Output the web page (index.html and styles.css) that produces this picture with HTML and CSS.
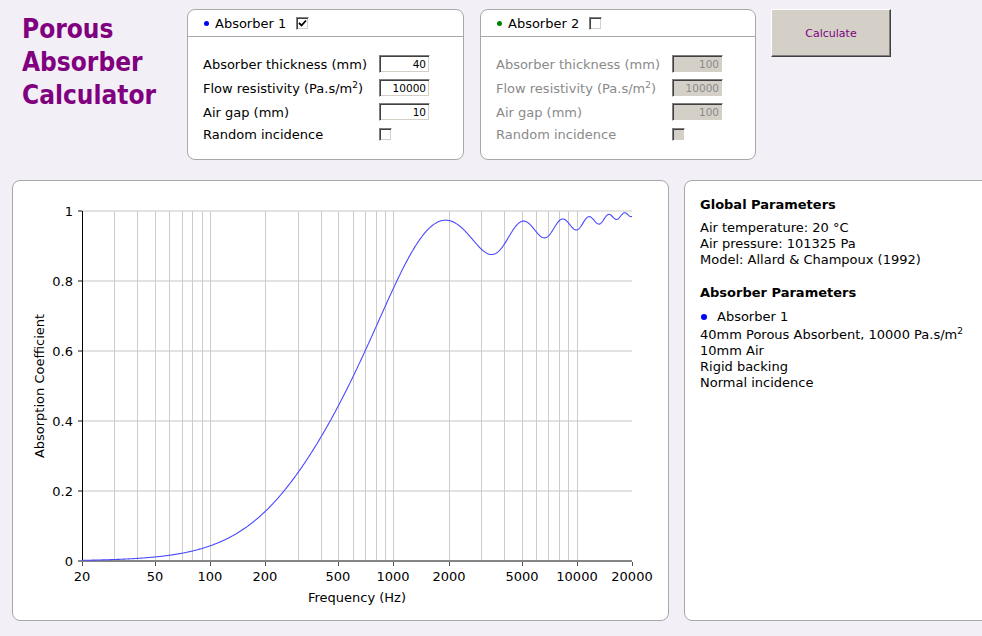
FILE: index.html
```html
<!DOCTYPE html>
<html>
<head>
<meta charset="utf-8">
<title>Porous Absorber Calculator</title>
<link rel="stylesheet" href="styles.css">
</head>
<body>
<div class="page">
  <div class="top">
    <h1 class="title">Porous<br>Absorber<br>Calculator</h1>

    <section class="panel absorber">
      <header class="panel-head">
        <span class="dot dot-blue"></span>
        <span class="head-label">Absorber 1</span>
        <span class="cb sunken"><svg class="check" viewBox="0 0 11 11" width="11" height="11"><polyline points="2,5 4.5,7.5 9,2.5" fill="none" stroke="#000" stroke-width="1.8"/></svg></span>
      </header>
      <div class="fields">
        <label class="field-label">Absorber thickness (mm)</label><input class="num sunken" value="40" readonly>
        <label class="field-label">Flow resistivity (Pa.s/m<sup>2</sup>)</label><input class="num sunken" value="10000" readonly>
        <label class="field-label">Air gap (mm)</label><input class="num sunken" value="10" readonly>
        <label class="field-label">Random incidence</label><span class="cb sunken"></span>
      </div>
    </section>

    <section class="panel absorber absorber-2">
      <header class="panel-head">
        <span class="dot dot-green"></span>
        <span class="head-label">Absorber 2</span>
        <span class="cb sunken"></span>
      </header>
      <div class="fields disabled">
        <label class="field-label">Absorber thickness (mm)</label><input class="num sunken" value="100" disabled>
        <label class="field-label">Flow resistivity (Pa.s/m<sup>2</sup>)</label><input class="num sunken" value="10000" disabled>
        <label class="field-label">Air gap (mm)</label><input class="num sunken" value="100" disabled>
        <label class="field-label">Random incidence</label><span class="cb sunken cb-disabled"></span>
      </div>
    </section>

    <button class="calc" type="button">Calculate</button>
  </div>

  <div class="bottom">
    <section class="panel chart">
      <svg class="chart-svg" width="655" height="439" viewBox="0 0 655 439">
        <g id="hgrid"></g>
        <g id="vgrid"></g>
        <g id="ticks"></g>
        <line class="axis-x" x1="66" y1="380" x2="619" y2="380"/>
        <line class="axis-y" x1="69.5" y1="30" x2="69.5" y2="380"/>
        <path id="curve" class="curve" d=""/>
        <g class="ylabels" text-anchor="end">
          <text x="60" y="35">1</text>
          <text x="60" y="105">0.8</text>
          <text x="60" y="175">0.6</text>
          <text x="60" y="245">0.4</text>
          <text x="60" y="315">0.2</text>
          <text x="60" y="385">0</text>
        </g>
        <g class="xlabels" text-anchor="middle">
          <text x="69" y="400">20</text>
          <text x="142" y="400">50</text>
          <text x="197" y="400">100</text>
          <text x="252" y="400">200</text>
          <text x="325" y="400">500</text>
          <text x="380" y="400">1000</text>
          <text x="436" y="400">2000</text>
          <text x="509" y="400">5000</text>
          <text x="564" y="400">10000</text>
          <text x="619" y="400">20000</text>
        </g>
        <text class="axis-title" x="344" y="421" text-anchor="middle">Frequency (Hz)</text>
        <text class="axis-title" transform="translate(30.5,205) rotate(-90)" text-anchor="middle">Absorption Coefficient</text>
      </svg>
    </section>

    <section class="panel info">
      <h2 class="info-head">Global Parameters</h2>
      <p class="info-line">Air temperature: 20 °C</p>
      <p class="info-line">Air pressure: 101325 Pa</p>
      <p class="info-line">Model: Allard &amp; Champoux (1992)</p>
      <h2 class="info-head info-head-2">Absorber Parameters</h2>
      <p class="info-line info-name"><span class="dot dot-blue dot-big"></span>Absorber 1</p>
      <p class="info-line">40mm Porous Absorbent, 10000 Pa.s/m<sup>2</sup></p>
      <p class="info-line">10mm Air</p>
      <p class="info-line">Rigid backing</p>
      <p class="info-line">Normal incidence</p>
    </section>
  </div>
</div>
<script src="script.js"></script>
</body>
</html>
```

FILE: styles.css
```css
html, body {
  margin: 0;
  padding: 0;
  width: 982px;
  height: 636px;
  overflow: hidden;
}
body {
  background: #f3eff6;
  font-family: "DejaVu Sans", Verdana, sans-serif;
  font-size: 13px;
  color: #000;
}
.page {
  width: 982px;
  height: 636px;
}
.top {
  display: flex;
  align-items: flex-start;
  height: 180px;
}
.title {
  margin: 0;
  width: 187px;
  flex-shrink: 0;
  box-sizing: border-box;
  padding: 13px 0 0 22px;
  font-family: "DejaVu Sans Condensed", "DejaVu Sans", sans-serif;
  font-stretch: condensed;
  font-weight: bold;
  font-size: 26px;
  line-height: 33px;
  color: #800080;
}
.panel {
  background: #fff;
  border: 1px solid #a8a8a8;
  border-radius: 8px;
  box-sizing: border-box;
  flex-shrink: 0;
}
.absorber {
  margin-top: 9px;
  width: 277px;
  height: 151px;
}
.absorber-2 {
  margin-left: 16px;
  width: 276px;
}
.panel-head {
  display: flex;
  align-items: center;
  height: 26px;
  border-bottom: 1px solid #a8a8a8;
  padding-left: 16px;
}
.head-label {
  margin-left: 6px;
  margin-right: 10px;
}
.dot {
  display: inline-block;
  width: 5px;
  height: 5px;
  border-radius: 50%;
}
.dot-blue { background: #0000ff; }
.dot-green { background: #008000; }
.dot-big {
  width: 6px;
  height: 6px;
  margin: 0 10px 1px 1px;
  vertical-align: middle;
}
.sunken {
  border: 1px solid;
  border-color: #808080 #ffffff #ffffff #808080;
  box-shadow: inset 1px 1px 0 #404040, inset -1px -1px 0 #d4d0c8;
  box-sizing: border-box;
}
.cb {
  display: inline-flex;
  align-items: center;
  justify-content: center;
  width: 13px;
  height: 13px;
  background: #fff;
}
.cb-disabled {
  background: #d4d0c8;
}
.check {
  display: block;
}
.fields {
  display: grid;
  grid-template-columns: 176px 51px;
  grid-template-rows: 18px 18px 18px 14px;
  row-gap: 6px;
  align-items: center;
  padding: 18px 0 0 15px;
}
.field-label {
  white-space: nowrap;
}
sup {
  font-size: 9px;
  line-height: 0;
  vertical-align: 5px;
}
.num {
  width: 51px;
  height: 18px;
  margin: 0;
  padding: 0 3px 0 0;
  background: #fff;
  color: #000;
  font-family: "DejaVu Sans", Verdana, sans-serif;
  font-size: 10.5px;
  text-align: right;
  outline: none;
}
.disabled .field-label {
  color: #8a8a8a;
}
.disabled .num {
  background: #d4d0c8;
  color: #8a8a8a;
}
.calc {
  margin: 9px 0 0 15px;
  width: 120px;
  height: 48px;
  padding: 0;
  background: #d4d0c8;
  border: 1px solid;
  border-color: #ffffff #404040 #404040 #ffffff;
  box-shadow: inset -1px -1px 0 #808080;
  color: #800080;
  font-family: "DejaVu Sans", Tahoma, sans-serif;
  font-size: 11px;
}
.bottom {
  display: flex;
  align-items: flex-start;
  padding-left: 12px;
  gap: 15px;
}
.chart {
  width: 657px;
  height: 441px;
}
.chart-svg {
  display: block;
  font-family: "DejaVu Sans", Verdana, sans-serif;
  font-size: 13px;
}
.hgrid-line { stroke: #e2e2e2; stroke-width: 2; }
.vgrid-line { stroke: #cccccc; stroke-width: 1; }
.ytick { stroke: #888888; stroke-width: 2; }
.xtick { stroke: #555555; stroke-width: 1; }
.axis-x { stroke: #858585; stroke-width: 2; }
.axis-y { stroke: #000000; stroke-width: 1; }
.curve {
  fill: none;
  stroke: #4a4aff;
  stroke-width: 1.1;
}
.info {
  width: 320px;
  height: 441px;
  border-radius: 8px 0 0 8px;
  padding: 16px 0 0 15px;
}
.info-head {
  margin: 0 0 7px 0;
  font-size: 13px;
  font-weight: bold;
  line-height: 16px;
}
.info-head-2 {
  margin-top: 17px;
  margin-bottom: 8px;
}
.info-line {
  margin: 0;
  line-height: 16px;
  white-space: nowrap;
}
.info-name {
  margin-bottom: 2px;
}
```

FILE: script.js
```js
(function () {
  var NS = 'http://www.w3.org/2000/svg';
  var X0 = 69, X1 = 619, Y0 = 380, Y1 = 30;
  function fx(f) { return X0 + Math.log10(f / 20) * (X1 - X0) / 3; }
  function fy(a) { return Y0 - a * (Y0 - Y1); }

  function addLine(parent, x1, y1, x2, y2, cls) {
    var l = document.createElementNS(NS, 'line');
    l.setAttribute('x1', x1); l.setAttribute('y1', y1);
    l.setAttribute('x2', x2); l.setAttribute('y2', y2);
    l.setAttribute('class', cls);
    parent.appendChild(l);
  }

  var hgrid = document.getElementById('hgrid');
  var vgrid = document.getElementById('vgrid');
  var ticks = document.getElementById('ticks');

  for (var i = 1; i <= 5; i++) {
    var y = fy(i * 0.2);
    addLine(hgrid, X0, y, X1, y, 'hgrid-line');
  }
  for (var j = 0; j <= 5; j++) {
    var yt = fy(j * 0.2);
    addLine(ticks, 65, yt, 69, yt, 'ytick');
  }
  for (var d = 10; d <= 10000; d *= 10) {
    for (var m = 1; m <= 9; m++) {
      var f = d * m;
      if (f <= 20 || f >= 20000) continue;
      var x = Math.round(fx(f)) + 0.5;
      addLine(vgrid, x, Y1, x, Y0, 'vgrid-line');
    }
  }
  [20, 50, 100, 200, 500, 1000, 2000, 5000, 10000, 20000].forEach(function (f) {
    var x = Math.round(fx(f)) + 0.5;
    addLine(ticks, x, 381, x, 385, 'xtick');
  });

  // complex helpers
  function c(re, im) { return [re, im]; }
  function add(a, b) { return [a[0] + b[0], a[1] + b[1]]; }
  function sub(a, b) { return [a[0] - b[0], a[1] - b[1]]; }
  function mul(a, b) { return [a[0] * b[0] - a[1] * b[1], a[0] * b[1] + a[1] * b[0]]; }
  function div(a, b) {
    var den = b[0] * b[0] + b[1] * b[1];
    return [(a[0] * b[0] + a[1] * b[1]) / den, (a[1] * b[0] - a[0] * b[1]) / den];
  }
  function csqrt(a) {
    var r = Math.hypot(a[0], a[1]);
    var re = Math.sqrt((r + a[0]) / 2);
    var im = Math.sqrt(Math.max(0, (r - a[0]) / 2));
    return [re, a[1] < 0 ? -im : im];
  }
  function ctan(a) {
    var den = Math.cos(2 * a[0]) + Math.cosh(2 * a[1]);
    return [Math.sin(2 * a[0]) / den, Math.sinh(2 * a[1]) / den];
  }
  function abs2(a) { return a[0] * a[0] + a[1] * a[1]; }

  var T = 20, P = 101325;
  var c0 = 20.047 * Math.sqrt(273.15 + T);
  var rho0 = P / (287.05 * (273.15 + T));
  var Z0 = rho0 * c0;
  var sigma = 10000, d1 = 0.040, d2 = 0.010;
  var J = c(0, 1);

  function alpha(f) {
    var w = 2 * Math.PI * f;
    var X = rho0 * f / sigma;
    var rho = add(c(1.2, 0), csqrt(c(-0.0364 / (X * X), -0.1144 / X)));
    var s = csqrt(c(2.82 / (X * X), 24.9 / X));
    var K = mul(c(101320, 0), div(add(c(0, 29.64), s), add(c(0, 21.17), s)));
    var Zc = csqrt(mul(rho, K));
    var kc = mul(c(w, 0), csqrt(div(rho, K)));
    // air gap backed by rigid wall
    var k0d = w / c0 * d2;
    var Z2 = c(0, -Z0 * Math.cos(k0d) / Math.sin(k0d));
    var t = ctan(mul(kc, c(d1, 0)));
    var num = add(Z2, mul(J, mul(Zc, t)));
    var den = add(Zc, mul(J, mul(Z2, t)));
    var Z1 = mul(Zc, div(num, den));
    var R = div(sub(Z1, c(Z0, 0)), add(Z1, c(Z0, 0)));
    return 1 - abs2(R);
  }

  var N = 720, dStr = '';
  for (var n = 0; n <= N; n++) {
    var fr = 20 * Math.pow(1000, n / N);
    var a = alpha(fr);
    if (!isFinite(a)) continue;
    a = Math.max(0, Math.min(1, a));
    dStr += (dStr ? ' L' : 'M') + fx(fr).toFixed(2) + ',' + fy(a).toFixed(2);
  }
  document.getElementById('curve').setAttribute('d', dStr);
})();
```
